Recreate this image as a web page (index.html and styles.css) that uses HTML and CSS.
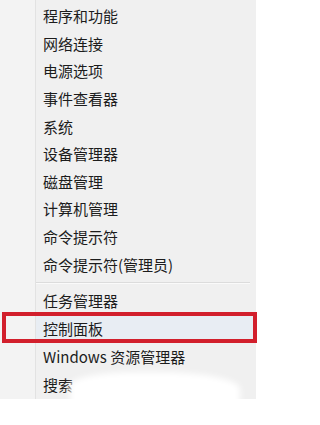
FILE: index.html
```html
<!DOCTYPE html>
<html lang="zh-CN">
<head>
<meta charset="utf-8">
<title>Win+X 菜单</title>
<link rel="stylesheet" href="styles.css">
</head>
<body>
<div class="menu">
  <div class="gutter"></div>
  <div class="content">
    <ul class="group first">
      <li class="item">程序和功能</li>
      <li class="item">网络连接</li>
      <li class="item">电源选项</li>
      <li class="item">事件查看器</li>
      <li class="item">系统</li>
      <li class="item">设备管理器</li>
      <li class="item">磁盘管理</li>
      <li class="item">计算机管理</li>
      <li class="item">命令提示符</li>
      <li class="item">命令提示符(管理员)</li>
    </ul>
    <div class="separator"></div>
    <ul class="group second">
      <li class="item">任务管理器</li>
      <li class="item selected">控制面板</li>
      <li class="item">Windows 资源管理器</li>
      <li class="item">搜索</li>
    </ul>
  </div>
  <div class="smudge"></div>
</div>
</body>
</html>
```

FILE: styles.css
```css
html, body {
  margin: 0;
  padding: 0;
  background: #ffffff;
}

body {
  width: 267px;
  height: 425px;
  overflow: hidden;
  font-family: "Noto Sans CJK SC", "Noto Sans", sans-serif;
  font-size: 15px;
  color: #1c1c1c;
}

.menu {
  position: relative;
  display: flex;
  width: 256px;
  height: 399px;
  background: #f0f0f0;
}

.gutter {
  width: 35px;
  flex: none;
  background: #f3f3f3;
  border-right: 1px solid #e2e2e2;
}

.content {
  flex: 1;
  display: flex;
  flex-direction: column;
}

.group {
  list-style: none;
  margin: 0;
  padding: 0;
}

.group.first {
  padding-top: 2px;
}

.item {
  height: 27.6px;
  display: flex;
  align-items: center;
  padding-left: 7px;
  line-height: 1;
  white-space: nowrap;
}

.second .item {
  height: 28px;
}

.separator {
  height: 9px;
  display: flex;
  align-items: center;
  margin-right: 6px;
}

.separator::before {
  content: "";
  flex: 1;
  height: 1px;
  background: #dcdcdc;
  box-shadow: 0 1px 0 #fafafa;
}

.selected {
  position: relative;
  background: #e8edf3;
}

.selected::before {
  content: "";
  position: absolute;
  left: -34px;
  right: -1px;
  top: -3px;
  bottom: 0;
  border: 4px solid #d21f2c;
  box-sizing: border-box;
  pointer-events: none;
}

.smudge {
  position: absolute;
  left: 70px;
  top: 372px;
  width: 170px;
  height: 34px;
  background: #ffffff;
  border-radius: 40% 50% 10% 10%;
  filter: blur(3px);
}
```
